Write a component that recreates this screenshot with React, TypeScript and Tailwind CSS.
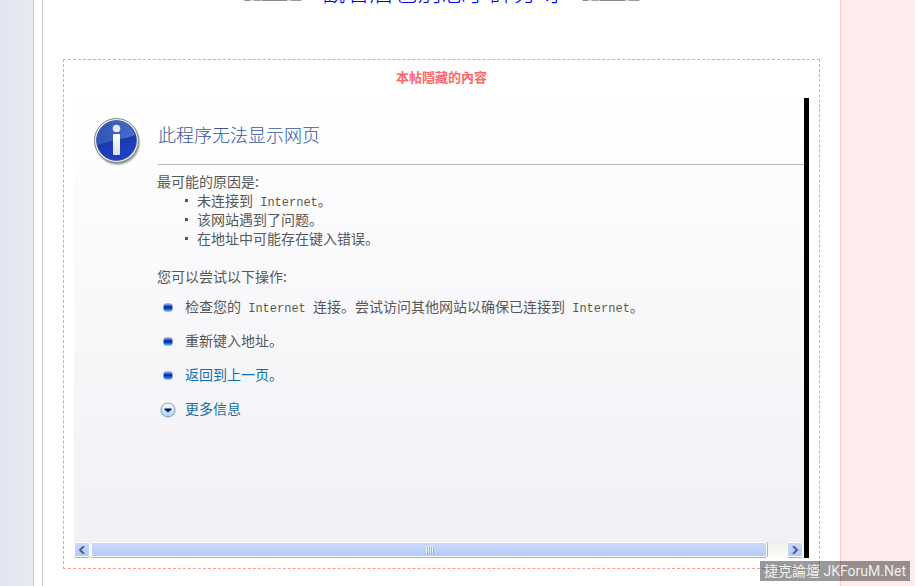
import React, { useState } from "react";

const reasons = [
    <>未连接到<Latin text=" Internet" />。</>,
    <>该网站遇到了问题。</>,
    <>在地址中可能存在键入错误。</>,
];

function Latin({ text }: { text: string }) {
    return (
        <span className="font-['Liberation_Mono',monospace] text-xs leading-none whitespace-pre">
            {text}
        </span>
    );
}

const InfoIcon = () => (
    <svg className="w-12 h-12 shrink-0" viewBox="0 0 48 48" aria-hidden="true">
        <defs>
            <linearGradient id="infoBlue" x1="0" y1="0" x2="0.3" y2="1">
                <stop offset="0" stopColor="#1d48a4" />
                <stop offset="0.5" stopColor="#173aa8" />
                <stop offset="1" stopColor="#1f3fc4" />
            </linearGradient>
            <linearGradient id="infoShine" x1="0" y1="0" x2="1" y2="0.4">
                <stop offset="0" stopColor="#5c86d8" stopOpacity="0.25" />
                <stop offset="1" stopColor="#6f97e4" stopOpacity="0.55" />
            </linearGradient>
            <linearGradient id="infoStem" x1="0" y1="0" x2="0" y2="1">
                <stop offset="0" stopColor="#ffffff" />
                <stop offset="1" stopColor="#dcdfe8" />
            </linearGradient>
            <radialGradient id="infoShadow">
                <stop offset="0.86" stopColor="#000000" stopOpacity="0.45" />
                <stop offset="1" stopColor="#000000" stopOpacity="0" />
            </radialGradient>
        </defs>
        <circle cx="23.5" cy="24.5" r="23.5" fill="url(#infoShadow)" />
        <circle cx="22.5" cy="22.5" r="22" fill="#eceef2" stroke="#7f848e" />
        <circle cx="22.5" cy="22.5" r="19.8" fill="url(#infoBlue)" stroke="#2a4690" />
        <path d="M3.5 27 A19.3 19.3 0 0 1 41 17 C34 20 18 22 3.5 27z" fill="url(#infoShine)" />
        <circle cx="22.5" cy="10.5" r="3.8" fill="#e6e9f0" />
        <rect x="19" y="16" width="7" height="21" rx="1" fill="url(#infoStem)" />
    </svg>
);

const BlueBullet = () => (
    <svg className="w-[10px] h-[9px]" viewBox="0 0 10 9" aria-hidden="true">
        <defs>
            <linearGradient id="bulletBlue" x1="0" y1="0" x2="0" y2="1">
                <stop offset="0" stopColor="#a9c0ea" />
                <stop offset="0.25" stopColor="#3d63c6" />
                <stop offset="0.5" stopColor="#0a1fb8" />
                <stop offset="0.75" stopColor="#1474d8" />
                <stop offset="1" stopColor="#5cb8ee" />
            </linearGradient>
        </defs>
        <rect x="0.5" y="0.5" width="9" height="8" rx="3" fill="url(#bulletBlue)" stroke="#8fa3cc" strokeOpacity="0.6" />
    </svg>
);

const MoreIcon = () => (
    <svg className="w-4 h-4" viewBox="0 0 16 16" aria-hidden="true">
        <defs>
            <linearGradient id="moreBlue" x1="0" y1="0" x2="0" y2="1">
                <stop offset="0" stopColor="#ffffff" />
                <stop offset="0.5" stopColor="#cfe6f7" />
                <stop offset="1" stopColor="#a5dcf8" />
            </linearGradient>
        </defs>
        <circle cx="8" cy="8" r="7" fill="url(#moreBlue)" stroke="#7f9dbd" />
        <path d="M4.500 6.500h7v1L8 10.500l-3.500-3z" fill="#07125c" />
    </svg>
);

// thin bottom edge of the sticker on either side of the headline
const Sticker = () => (
    <svg className="w-[58px] h-px mt-6 shrink-0" viewBox="0 0 58 1" aria-hidden="true">
        <rect width="58" height="1" fill="#d8d8d8" />
        <rect x="1" width="5" height="1" fill="#8a8a8a" />
        <rect x="10" width="7" height="1" fill="#a0a0a0" />
        <rect x="18" width="25" height="1" fill="#8a8a8a" />
        <rect x="47" width="10" height="1" fill="#999999" />
    </svg>
);

const ScrollButton = ({ label, d }: { label: string; d: string }) => (
    <button
        aria-label={label}
        className="w-4 h-[15px] shrink-0 flex items-center justify-center rounded-xs border border-white bg-linear-to-b from-[#c9d8fd] to-[#b3c9fb] shadow-[0_1px_0_#9ab4dc]"
    >
        <svg className="w-2 h-2" viewBox="0 0 8 8" fill="none" stroke="#4d6185" strokeWidth="2">
            <path d={d} />
        </svg>
    </button>
);

const Scrollbar = () => (
    <div className="h-[17px] flex items-start gap-px pt-px pr-px bg-linear-to-b from-[#eeede5] to-[#fefefb]">
        <ScrollButton label="向左滚动" d="M6 0L2 4L6 8" />
        <div className="flex-1 flex pr-[19px]">
            <div className="flex-1 h-[15px] flex items-center justify-center gap-px rounded-xs border border-white bg-linear-to-b from-[#c9d8fd] via-[#c2d3fc] to-[#b3c9f7] shadow-[0_1px_0_#9ab4dc,1px_0_0_#9ab4dc]">
                {[0, 1, 2, 3].map((n) => (
                    <span key={n} className="w-px h-[7px] bg-[#eef4fe] shadow-[1px_1px_0_#8cb0f8]" />
                ))}
            </div>
        </div>
        <ScrollButton label="向右滚动" d="M2 0L6 4L2 8" />
    </div>
);

const ErrorFrame = () => {
    const [showMore, setShowMore] = useState(false);

    return (
        <section className="border-r-[5px] border-black font-['Noto_Sans_CJK_SC',sans-serif] text-sm leading-[19px] text-[#575757]">
            <div className="bg-linear-to-b from-white to-[#f1f1f6] pb-[123px]">
                <div className="flex pl-5">
                    <div className="w-16 h-[67px] pt-5">
                        <InfoIcon />
                    </div>
                    <div className="flex-1 border-b border-[#b6bac6] pt-6">
                        <h1 className="text-lg leading-6 font-light text-[#3557a0]">此程序无法显示网页</h1>
                    </div>
                </div>
                <div className="pl-[83px] pt-[7px]">
                    <p>最可能的原因是:</p>
                    <ul>
                        {reasons.map((reason, i) => (
                            <li key={i} className="flex items-center pl-7">
                                <span className="w-[3px] h-[3px] mr-[9px] bg-[#575757]" />
                                <span>{reason}</span>
                            </li>
                        ))}
                    </ul>
                    <p className="mt-[19px]">您可以尝试以下操作:</p>
                    <ul className="mt-[11px] space-y-[15px]">
                        <li className="flex items-center">
                            <span className="w-7 flex justify-start pl-[6px] pt-[2px]"><BlueBullet /></span>
                            <span>
                                检查您的<Latin text=" Internet " />连接。尝试访问其他网站以确保已连接到
                                <Latin text=" Internet" />。
                            </span>
                        </li>
                        <li className="flex items-center">
                            <span className="w-7 flex justify-start pl-[6px] pt-[2px]"><BlueBullet /></span>
                            <span>重新键入地址。</span>
                        </li>
                        <li className="flex items-center">
                            <span className="w-7 flex justify-start pl-[6px] pt-[2px]"><BlueBullet /></span>
                            <a href="#back" className="text-[#136fab]">返回到上一页。</a>
                        </li>
                        <li>
                            <button
                                onClick={() => setShowMore(!showMore)}
                                aria-expanded={showMore}
                                className="flex items-center text-[#136fab]"
                            >
                                <span className="w-7 flex justify-start pl-[3px] pt-[2px]"><MoreIcon /></span>
                                更多信息
                            </button>
                        </li>
                    </ul>
                </div>
            </div>
            <Scrollbar />
        </section>
    );
};

const App = () => {
    return (
        <div className="relative flex min-h-screen overflow-hidden bg-white">
            <div className="w-[33px] shrink-0 bg-linear-to-r from-[#e1e6f0] to-[#e9ebf2]" />
            <div className="w-[10px] shrink-0 border-x border-[#c8c8cc]" />
            <main className="flex-1 min-w-0 px-5">
                <div className="h-[59px] overflow-hidden">
                    <div className="-mt-6 flex justify-center gap-5">
                        <Sticker />
                        <h2 className="font-['Noto_Sans_CJK_TC',sans-serif] text-2xl leading-[30px] font-light text-[#0000ff] whitespace-nowrap">
                            觀看后也別忘了評分呀
                        </h2>
                        <Sticker />
                    </div>
                </div>
                <div className="border border-dashed border-[#ff9a9a] px-[10px] pt-2 pb-[10px]">
                    <h3 className="mb-3 text-center font-['Noto_Sans_CJK_TC',sans-serif] text-[13px] leading-[18px] font-bold text-[#ff6666]">
                        本帖隱藏的內容
                    </h3>
                    <ErrorFrame />
                </div>
            </main>
            <div className="w-[75px] shrink-0 border-l border-[#ffcccc] bg-[#feebeb]" />
            <div className="absolute right-[5px] bottom-[5px] w-[150px] h-5 flex items-center justify-center bg-black/40 font-['Roboto','Noto_Sans_CJK_TC',sans-serif] text-sm leading-5 text-[#eeeeee] whitespace-nowrap">
                捷克論壇 JKForuM.Net
            </div>
        </div>
    );
};

export default App;
